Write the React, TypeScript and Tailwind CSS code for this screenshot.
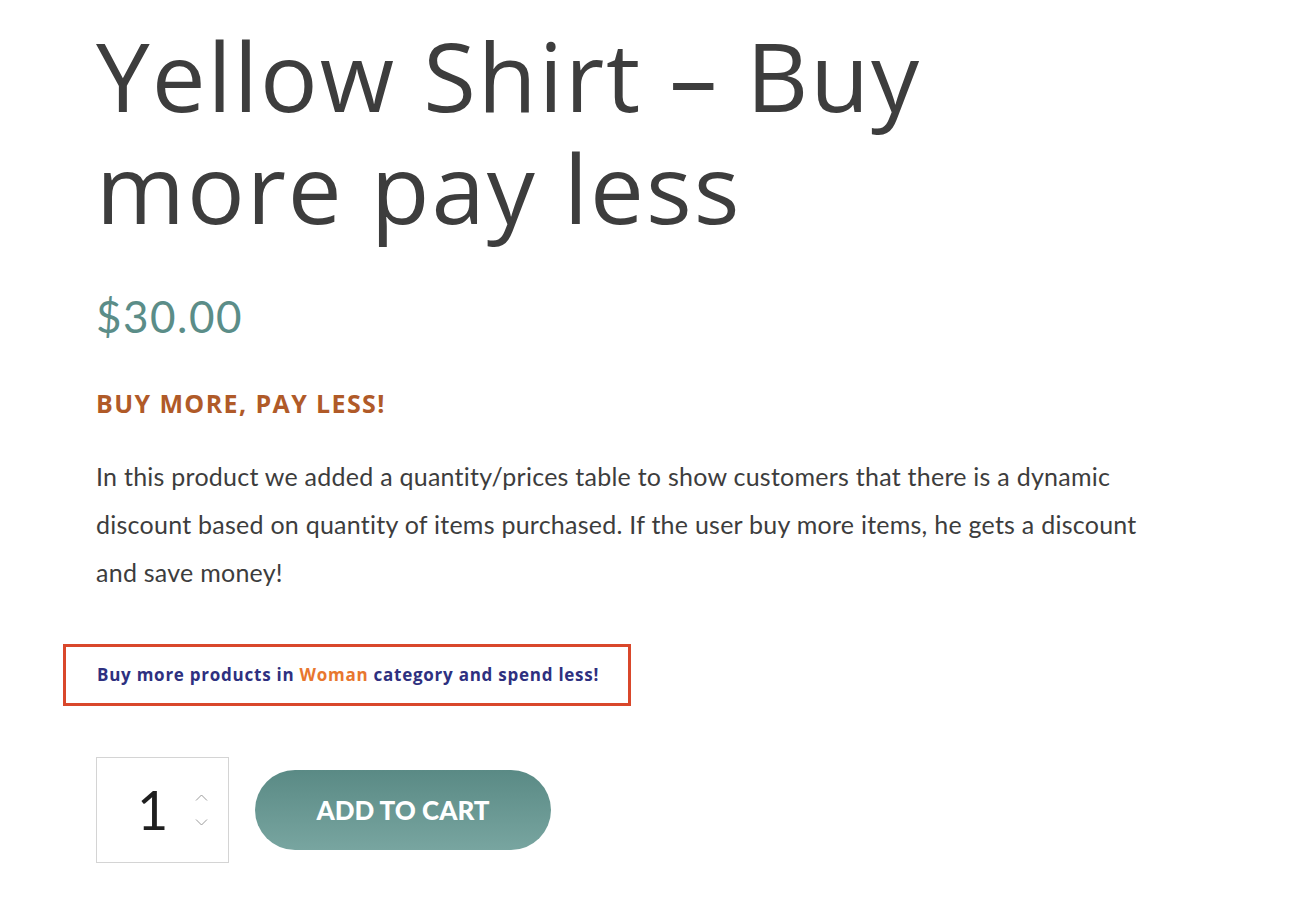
import React from "react";

export default function App() {
  return (
    <div className="min-h-[916px] w-full bg-white">
      <div className="pl-[96px] pt-[19px]">
        <h1
          className="text-[#3d3d3d] text-[96px] leading-[112px] font-normal tracking-[2px]"
          style={{ fontFamily: '"Open Sans", "Liberation Sans", sans-serif' }}
        >
          Yellow Shirt – Buy
          <br />
          more pay less
        </h1>
        <div
          className="mt-[45px] text-[#5b8d88] text-[44px] leading-[56px] tracking-[1.5px]"
          style={{ fontFamily: 'Lato, "Liberation Sans", sans-serif' }}
        >
          $30.00
        </div>
        <div
          className="mt-[44px] text-[#b05a28] text-[25px] leading-[30px] font-bold tracking-[1.4px]"
          style={{ fontFamily: '"Open Sans", "Liberation Sans", sans-serif' }}
        >
          BUY MORE, PAY LESS!
        </div>
        <p
          className="mt-[34px] text-[#3d3d3d] text-[25px] leading-[48px] tracking-[0.25px]"
          style={{ fontFamily: 'Lato, "Liberation Sans", sans-serif' }}
        >
          In this product we added a quantity/prices table to show customers that there is a dynamic
          <br />
          discount based on quantity of items purchased. If the user buy more items, he gets a discount
          <br />
          and save money!
        </p>
      </div>
      <div className="pl-[63px] mt-[48px]">
        <div
          className="w-[568px] h-[62px] border-[3px] border-[#d9472b] flex items-center pl-[31px] text-[17px] font-bold text-[#2e3080] tracking-[0.75px]"
          style={{ fontFamily: '"Open Sans", "Liberation Sans", sans-serif' }}
        >
          <span>
            Buy more products in <span className="text-[#e8772e]">Woman</span> category and spend less!
          </span>
        </div>
      </div>
      <div className="pl-[96px] mt-[51px] flex items-center gap-[26px]">
        <div className="w-[133px] h-[106px] border border-[#d4d4d4] flex items-center">
          <span
            className="ml-[40px] text-[54px] text-[#1f1f1f] leading-none font-normal"
            style={{ fontFamily: 'Lato, "Liberation Sans", sans-serif' }}
          >
            1
          </span>
          <div className="ml-auto mr-[20px] flex flex-col items-center gap-[18px]">
            <svg width="13" height="7" viewBox="0 0 13 7" fill="none">
              <path d="M1 6.5L6.5 1L12 6.5" stroke="#9a9a9a" strokeWidth="1" />
            </svg>
            <svg width="13" height="7" viewBox="0 0 13 7" fill="none">
              <path d="M1 0.5L6.5 6L12 0.5" stroke="#9a9a9a" strokeWidth="1" />
            </svg>
          </div>
        </div>
        <button
          className="w-[296px] h-[80px] rounded-full bg-gradient-to-b from-[#5a8a85] to-[#78a5a0] text-white text-[26px] font-black tracking-[0px]"
          style={{ fontFamily: 'Lato, "Liberation Sans", sans-serif' }}
        >
          ADD TO CART
        </button>
      </div>
    </div>
  );
}
